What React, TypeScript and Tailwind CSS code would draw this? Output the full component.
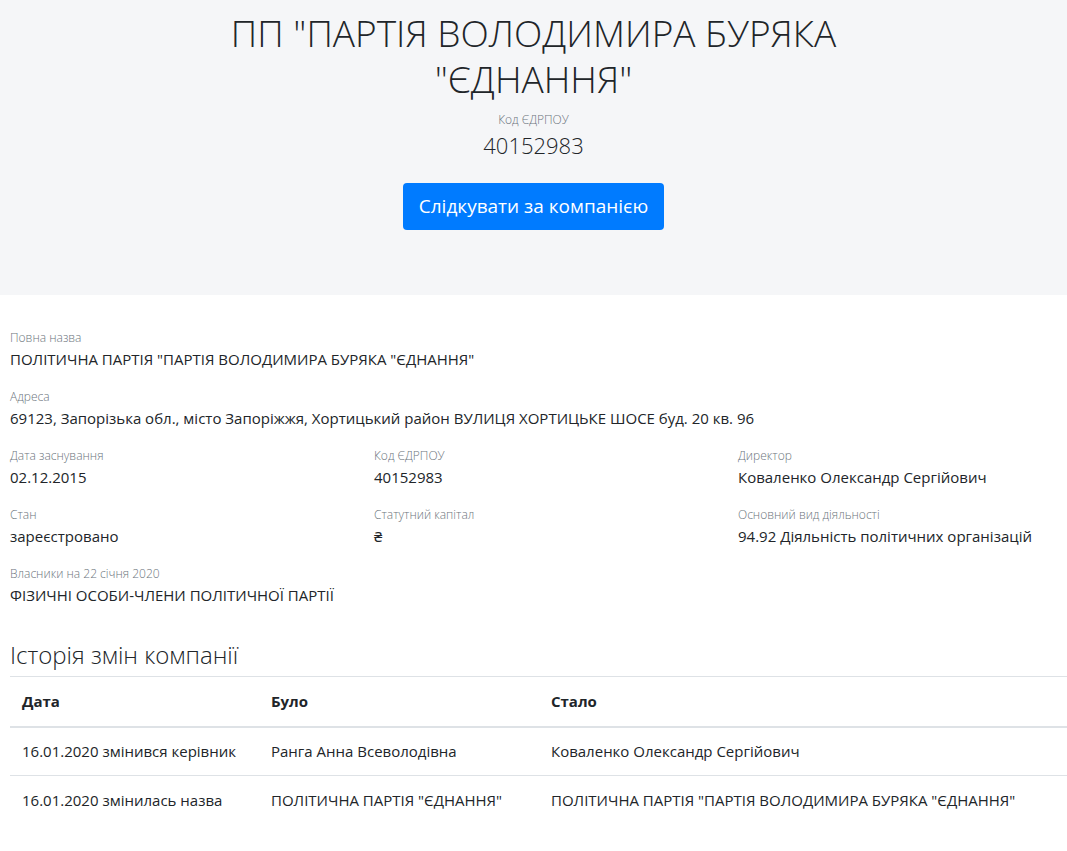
import React from 'react';

const font = { fontFamily: '"Open Sans", "Noto Sans", sans-serif' };

const Field = ({ label, value }: { label: string; value: string }) => (
    <div className="h-[59px]">
        <div className="text-[12px] leading-[18px] font-light text-[#6c757d]">{label}</div>
        <div className="text-[15px] leading-[24px] text-[#212529]">{value}</div>
    </div>
);

const history = [
    { date: '16.01.2020 змінився керівник', was: 'Ранга Анна Всеволодівна', now: 'Коваленко Олександр Сергійович' },
    { date: '16.01.2020 змінилась назва', was: 'ПОЛІТИЧНА ПАРТІЯ "ЄДНАННЯ"', now: 'ПОЛІТИЧНА ПАРТІЯ "ПАРТІЯ ВОЛОДИМИРА БУРЯКА "ЄДНАННЯ"' },
];

const App: React.FC = () => {
    return (
        <div className="min-h-screen bg-white text-[#212529]" style={font}>
            <div className="bg-[#f5f6f8] h-[295px] pt-[10px]">
                <div className="max-w-[720px] mx-auto px-[15px] text-center">
                    <h1 className="text-[37px] leading-[46px] font-light text-[#212529]">
                        ПП "ПАРТІЯ ВОЛОДИМИРА БУРЯКА "ЄДНАННЯ"
                    </h1>
                    <div className="mt-[10px] text-[12px] leading-[16px] font-light text-[#6c757d]">Код ЄДРПОУ</div>
                    <div className="text-[22px] leading-[34px] font-light">40152983</div>
                    <button className="mt-[21px] px-[16px] h-[47px] bg-[#007bff] text-white text-[19px] rounded-[4px]">
                        Слідкувати за компанією
                    </button>
                </div>
            </div>

            <div className="pl-[10px] pt-[34px]">
                <Field label="Повна назва" value={'ПОЛІТИЧНА ПАРТІЯ "ПАРТІЯ ВОЛОДИМИРА БУРЯКА "ЄДНАННЯ"'} />
                <Field label="Адреса" value="69123, Запорізька обл., місто Запоріжжя, Хортицький район ВУЛИЦЯ ХОРТИЦЬКЕ ШОСЕ буд. 20 кв. 96" />
                <div className="grid grid-cols-[364px_364px_1fr]">
                    <Field label="Дата заснування" value="02.12.2015" />
                    <Field label="Код ЄДРПОУ" value="40152983" />
                    <Field label="Директор" value="Коваленко Олександр Сергійович" />
                    <Field label="Стан" value="зареєстровано" />
                    <Field label="Статутний капітал" value="₴" />
                    <Field label="Основний вид діяльності" value="94.92 Діяльність політичних організацій" />
                </div>
                <Field label="Власники на 22 січня 2020" value="ФІЗИЧНІ ОСОБИ-ЧЛЕНИ ПОЛІТИЧНОЇ ПАРТІЇ" />

                <h3 className="mt-[15px] text-[24px] leading-[32px] font-light text-[#212529]">Історія змін компанії</h3>
                <table className="w-full mt-[5px] text-[15px] text-left border-collapse">
                    <thead>
                        <tr className="border-t border-[#dee2e6] border-b-2">
                            <th className="w-[249px] px-[12px] h-[50px] font-bold">Дата</th>
                            <th className="w-[280px] px-[12px] font-bold">Було</th>
                            <th className="px-[12px] font-bold">Стало</th>
                        </tr>
                    </thead>
                    <tbody>
                        {history.map((row, i) => (
                            <tr key={i} className={i > 0 ? 'border-t border-[#dee2e6]' : ''}>
                                <td className="px-[12px] h-[49px]">{row.date}</td>
                                <td className="px-[12px]">{row.was}</td>
                                <td className="px-[12px]">{row.now}</td>
                            </tr>
                        ))}
                    </tbody>
                </table>
            </div>
        </div>
    );
};

export default App;
